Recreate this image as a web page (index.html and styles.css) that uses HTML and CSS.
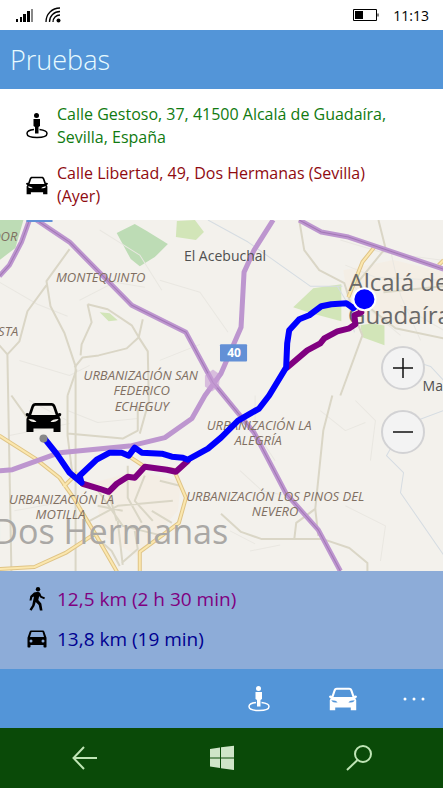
FILE: index.html
```html
<!DOCTYPE html>
<html lang="es">
<head>
    <meta charset="utf-8">
    <meta name="viewport" content="width=device-width, initial-scale=1.0">
    <title>Pruebas</title>
    <link rel="stylesheet" href="styles.css">
</head>
<body>
    <!-- Iconos compartidos -->
    <svg class="sprite" aria-hidden="true">
        <symbol id="icon-person" viewBox="0 0 22 26">
            <circle cx="10.500" cy="2.500" r="2.500"/>
            <path d="M7.500 6h6.500v7l-1.500 1v6.500h-3.500v-6.500l-1.500-1z"/>
            <path fill="none" stroke="currentColor" stroke-width="1.500" d="M8 16.500C3.500 17 1 18.500 1 20.500c0 2.500 4.500 4 10 4s10-1.500 10-4c0-2-3-3.500-7.500-4"/>
        </symbol>
        <symbol id="icon-car" viewBox="0 0 36 30">
            <path fill-rule="evenodd" d="M10 0.500h16c2 0 3.200 1 4 3l2.600 7.500c.7-.9 2.400-.8 3.200.2.400 1.300-.6 2.600-2 2.800l1.200 2.500v13h-7v-3.500h-20v3.500h-7v-13l1.200-2.500c-1.400-.2-2.400-1.500-2-2.800.8-1 2.500-1.100 3.200-.2l2.600-7.500c.8-2 2-3 4-3zM10.500 3.200c-1.100 0-1.700.5-2.100 1.500l-2.600 7.800h24.400l-2.600-7.800c-.4-1-1-1.500-2.100-1.500zM3 16.500c1 2.500 4 3 8 3-1-2-4-3-8-3zM33 16.500c-4 0-7 1-8 3 4 0 7-.5 8-3z"/>
        </symbol>
        <symbol id="icon-car-round" viewBox="0 0 20 18">
            <path fill-rule="evenodd" d="M4.500 0.500h11c1 0 1.600.4 1.900 1.300l2.100 6v8.700c0 .6-.3 1-1 1h-1c-.6 0-1-.4-1-1v-1.500h-13v1.500c0 .6-.4 1-1 1h-1c-.7 0-1-.4-1-1v-8.700l2.100-6c.3-.9.900-1.300 1.900-1.300zM4.500 2l-1.500 5h14l-1.500-5zM4 9.500a1.500 1.500 0 1 0 0 3a1.500 1.500 0 1 0 0-3zM16 9.500a1.500 1.500 0 1 0 0 3a1.500 1.500 0 1 0 0-3z"/>
        </symbol>
        <symbol id="icon-walk" viewBox="0 0 16 24">
            <circle cx="9" cy="2.200" r="2.200"/>
            <path d="M5 5.500l4-.8 2 1 1.500 3.300 3.500 1.500-.8 1.700-4-1.700-1-1.500-.9 4 3 3.500 1.200 7H10.900l-1.200-5.500-3-3-1.200 4-3 4.700-2-1.200 2.700-4.300 1.800-8.700-1.700.8-.8 3.200H.500l.8-4.500z"/>
        </symbol>
    </svg>

    <div class="status-bar">
        <svg class="signal" viewBox="0 0 18 14" aria-hidden="true">
            <path d="M0 11h2v3H0zM4 9h2v5H4zM7 6h3v8H7zM11 3h3v11h-3z"/>
            <path fill="#888" d="M15 1h2v13h-2z"/>
        </svg>
        <svg class="wifi" viewBox="0 0 17 16" aria-hidden="true">
            <circle cx="13.500" cy="13.500" r="2"/>
            <path fill="none" stroke="#000" stroke-width="1.300" d="M1 15C1 7 7 1 15 1M4.500 15c0-6 4.500-10.500 10.500-10.500M8 15c0-4 3-7 7-7"/>
        </svg>
        <svg class="battery" viewBox="0 0 26 12" aria-hidden="true">
            <path fill="none" stroke="#000" d="M.5.500h23v11H.500zM25 4.500v3"/>
            <path d="M2 2h8v8H2z"/>
        </svg>
        <time>11:13</time>
    </div>

    <header class="title-bar">
        <h1>Pruebas</h1>
    </header>

    <section class="addresses">
        <div class="row origin">
            <svg class="icon-person"><use href="#icon-person"/></svg>
            <p>Calle Gestoso, 37, 41500 Alcalá de Guadaíra, Sevilla, España</p>
        </div>
        <div class="row destination">
            <svg class="icon-car"><use href="#icon-car"/></svg>
            <p>Calle Libertad, 49, Dos Hermanas (Sevilla) (Ayer)</p>
        </div>
    </section>

    <main class="map">
        <svg class="map-canvas" viewBox="0 0 443 350" preserveAspectRatio="xMidYMid slice" role="img" aria-label="Mapa de la ruta">
            <!-- Zonas verdes -->
            <g class="park">
                <path d="M0 0h24l-8 28-16 12z"/>
                <path d="M117 13l18-9 12 7 21 13-13 13-15 9-9-7z"/>
                <path class="pale" d="M177 1l18-1 9 12-8 8-20-3z"/>
                <path class="pale" d="M293 87l20-19 28-4v37l-30-8zM360 105l24-4v24l-22-8z"/>
                <path class="pale" d="M100 92l10 1 8 7-9 1zM132 277l10-4 6 4-8 5z"/>
            </g>
            <path class="town" d="M343 50l50-10 50 12v45l-50 10-43-8zM94 262l42-12 45 10-3 30-40 45-35-20z"/>

            <!-- Calles y carreteras locales -->
            <g class="street">
                <path d="M100 10l40 25 22 35M80 80l35-18 30 5M0 62l38 22 30 12M20 140l50 15 20-10M160 60l40 12 28 40M160 140l40-16"/>
                <path d="M340 20l40 12 60 8M345 45l30 12 68 3M350 60l20 30 30 25M390 30l10 45 20 45M400 85l43 25"/>
                <path d="M355 180l20 20-5 40M320 190l25 20 20-8M240 250l22 20 20 4M30 180l38 20M10 215l60-12M15 290l55-10"/>
                <path d="M230 310l25 13M250 330l30-6M345 285l40 20-5 35M255 175v35l20 30M68 190l30 12 40-4"/>
            </g>
            <path class="river" d="M208 0l40 22 62 44h32M443 190l-40 15-17 30 17 17-3 20 43 62M405 138l25 8 13 14M337 66l12 20 5 26"/>
            <g class="local">
                <path d="M70 29L47 61l4 25 14 27 11 33v204M47 65L28 91l-8 30-12 13-8-9M8 134l4 216"/>
                <path d="M88 84l20 5 24 16 7 12-12 11-28 7-16 2-8 10M88 84l4 18-10 22-1 11M139 117l4-18M139 117l9 14 1 50-9 32"/>
                <path d="M68 175l9-26M68 175v40l5 40M68 213l55 5 15-8v-24M12 175l20 28"/>
                <path d="M299 0l5 30 15 20 25 13 10 32 8 20-22 60M332 175l-9 35-8 78-19 14-2 17"/>
                <path d="M221 293l20 18 20 7h61l27 9 18 15v8M315 288l3 27M443 118l-48-10-24-19M383 72l60-6M356 64l29-36-7-28"/>
                <path d="M95 265l28 40 40 10M128 245v32l14 25M90 300l28-15 55-5M109 272l8 28M92 312l20 18 8 15M145 255l-10 25 18 20M160 260l20 5M118 300l5 44M152 290l20 12M98 285l25 5M135 310l3 18-16 14"/>
            </g>

            <!-- Carreteras secundarias -->
            <g class="road-edge">
                <path id="sec1" d="M0 215l36 23 24 19 14 20 21 35 23 40"/>
                <path id="sec2" d="M0 348l35-2 31-14 29-19"/>
                <path id="sec3" d="M64 266l14-14M128 235l17 11 29 3 12 28-7 25-16 12-23 17v20"/>
                <path id="sec4" d="M374 27l-12 15-14 35M443 40l-5 5"/>
            </g>
            <g class="road">
                <use href="#sec1"/><use href="#sec2"/><use href="#sec3"/><use href="#sec4"/>
            </g>

            <!-- Topónimo grande, por debajo de las rutas -->
            <text class="label city-label large" x="111" y="323">Dos Hermanas</text>

            <!-- Autovías -->
            <g class="highway">
                <path d="M273 0l-19 30-10 22-3 55-20 46-16 22-13 23-27 19-33 8-72 7-47 17-13 1"/>
                <path d="M30 0l-8 22-12 23-10 11"/>
                <path d="M37 0l33 22 62 63 54 27 27 50 41 50 32 61 32 36 22 41"/>
                <path d="M299 0l22 12 27 5 95 32"/>
            </g>
            <g class="highway-line">
                <path d="M30 0l-8 22-12 23-10 11M37 0l33 22 62 63 54 27 27 50 41 50 32 61 32 36 22 41M299 0l22 12 27 5 95 32"/>
            </g>
            <path class="junction" d="M205 155l8-6 7 5-1 12-7 5-7-5z"/>
            <path class="sign" d="M27 0h26v2H27z"/>
            <rect class="sign" x="220" y="124" width="27" height="17" rx="1"/>
            <text class="sign-text" x="234" y="137">40</text>

            <!-- Topónimos -->
            <g class="label city-label">
                <text x="398" y="71">Alcalá de</text>
                <text x="399" y="104">Guadaíra</text>
            </g>
            <text class="label village" x="225" y="41">El Acebuchal</text>
            <text class="label village start" x="422" y="171">Mairena</text>
            <g class="label area">
                <text x="101" y="62">MONTEQUINTO</text>
                <text class="end" x="18" y="21">NERVADOR</text>
                <text class="end" x="19" y="116">COSTA</text>
                <text x="141" y="160">URBANIZACIÓN SAN</text>
                <text x="142" y="175">FEDERICO</text>
                <text x="142" y="190">ECHEGUY</text>
                <text x="259" y="209">URBANIZACIÓN LA</text>
                <text x="258" y="224">ALEGRÍA</text>
                <text x="62" y="283">URBANIZACIÓN LA</text>
                <text x="61" y="298">MOTILLA</text>
                <text x="275" y="280">URBANIZACIÓN LOS PINOS DEL</text>
                <text x="275" y="295">NEVERO</text>
            </g>

            <!-- Rutas: a pie y en coche -->
            <path class="route walk" d="M360 88l1 4-7 3 1 9-6 4-12 3-13 7-4 5-13 7-20 17M188 240l-12 11-9-2-22-3-10 11-7-1-11 7-8 8-9-3-17-5"/>
            <path class="route drive" d="M364 79l-11 9-7-5-15 1-10 2-12 9-10 4-10 11-2 13-1 24-17 28-10 13-21 12-17 17-13 11-20 11-5-2-11-1-10-3-20-1-7-5-6 8-7-3h-12l-13 7-17 16 2 7-12-10-13-19-12-15"/>
            <circle class="start-dot" cx="44" cy="218" r="4"/>
            <circle class="end-dot" cx="364" cy="79" r="11"/>
            <use href="#icon-car" x="26" y="181" width="36" height="32"/>
        </svg>
        <div class="zoom">
            <button type="button" aria-label="Acercar">
                <svg viewBox="0 0 20 20"><path d="M0 10h20M10 0v20"/></svg>
            </button>
            <button type="button" aria-label="Alejar">
                <svg viewBox="0 0 20 20"><path d="M0 10h20"/></svg>
            </button>
        </div>
    </main>

    <section class="summary">
        <div class="row walk-time">
            <svg class="icon-walk"><use href="#icon-walk"/></svg>
            <p>12,5 km (2 h 30 min)</p>
        </div>
        <div class="row drive-time">
            <svg class="icon-car-round"><use href="#icon-car-round"/></svg>
            <p>13,8 km (19 min)</p>
        </div>
    </section>

    <div class="app-bar">
        <button type="button" aria-label="Mi posición">
            <svg class="bar-person"><use href="#icon-person"/></svg>
        </button>
        <button type="button" aria-label="Mi coche">
            <svg class="bar-car"><use href="#icon-car"/></svg>
        </button>
        <button type="button" class="more" aria-label="Más">
            <svg class="bar-more" viewBox="0 0 24 4"><circle cx="3" cy="2" r="1.500"/><circle cx="12" cy="2" r="1.500"/><circle cx="21" cy="2" r="1.500"/></svg>
        </button>
    </div>

    <nav class="nav-bar">
        <button type="button" aria-label="Atrás">
            <svg viewBox="0 0 26 26"><path class="line" d="M25 13H2M12 2L1.500 13L12 24"/></svg>
        </button>
        <button type="button" aria-label="Inicio">
            <svg viewBox="0 0 26 26"><path d="M1 4l10-1.500v10H1zM12 2.300L25 .800v11.700H12zM1 13.500h10v9.500L1 21.500zM12 13.500h13V25l-13-1.800z"/></svg>
        </button>
        <button type="button" aria-label="Buscar">
            <svg viewBox="0 0 26 26"><circle class="line" cx="17" cy="9" r="8"/><path class="line" d="M11.500 15L1 25"/></svg>
        </button>
    </nav>
</body>
</html>
```

FILE: styles.css
```css
* {
    box-sizing: border-box;
}
body {
    margin: 0;
    min-height: 100vh;
    display: flex;
    flex-direction: column;
    font-family: "Open Sans", "Noto Sans", sans-serif;
    background: #fff;
}
h1, p {
    margin: 0;
    font-weight: 400;
}
svg {
    display: block;
    fill: currentColor;
}
button {
    display: flex;
    align-items: center;
    justify-content: center;
    padding: 0;
    border: none;
    background: none;
    color: inherit;
    cursor: pointer;
}
.sprite {
    position: absolute;
    width: 0;
    height: 0;
}

/* Barra de estado */
.status-bar {
    display: flex;
    align-items: center;
    height: 30px;
    padding: 0 14px 0 16px;
    font-size: 14px;
}
.signal {
    width: 18px;
    height: 14px;
}
.wifi {
    width: 17px;
    height: 16px;
    margin-left: 11px;
}
.battery {
    width: 26px;
    height: 12px;
    margin-left: auto;
}
.status-bar time {
    margin-left: 14px;
}

.title-bar {
    display: flex;
    align-items: center;
    height: 59px;
    padding: 0 10px;
    background: #5395d8;
    color: #e8fbff;
}
.title-bar h1 {
    font-size: 27px;
    font-weight: 300;
}

/* Direcciones y resumen */
.addresses {
    display: flex;
    flex-direction: column;
    gap: 13px;
    padding: 14px 40px 12px 25px;
    font-size: 16px;
    line-height: 23px;
}
.row {
    display: grid;
    grid-template-columns: 24px 1fr;
    gap: 8px;
    align-items: center;
}
.row svg {
    justify-self: center;
    color: #000;
}
.origin {
    color: #107a10;
}
.destination {
    color: #8f0a10;
}
.icon-person {
    width: 22px;
    height: 26px;
}
.icon-car {
    width: 22px;
    height: 19px;
}
.icon-walk {
    width: 16px;
    height: 24px;
}
.icon-car-round {
    width: 20px;
    height: 18px;
}
.summary {
    display: flex;
    flex-direction: column;
    gap: 16px;
    padding: 16px 25px 18px;
    background: #8dacd8;
    font-size: 19px;
    line-height: 24px;
}
.walk-time {
    color: #800080;
}
.drive-time {
    color: #000090;
}

/* Mapa */
.map {
    position: relative;
    flex: 1;
    display: grid;
    min-height: 240px;
    overflow: hidden;
    background: #f3f1ec;
}
.map-canvas {
    width: 100%;
    height: 100%;
    min-height: 0;
}
.map-canvas path {
    stroke-linejoin: round;
}
.park path {
    fill: #bddcb5;
}
.park .pale {
    fill: #d2e5b8;
}
.town {
    fill: #f4eee5;
}
.street, .local, .road, .road-edge, .highway, .highway-line, .river {
    fill: none;
}
.street {
    stroke: #e9e7e1;
}
.river {
    stroke: #d5dce2;
}
.local {
    stroke: #dad6c6;
    stroke-width: 2;
}
.road-edge {
    stroke: #dfc487;
    stroke-width: 4;
}
.road {
    stroke: #fbe7ae;
    stroke-width: 2;
}
.highway {
    stroke: #bd96cf;
    stroke-width: 5;
}
.highway-line {
    stroke: #a277b5;
}
.junction {
    fill: #c79bd3;
    opacity: 0.6;
}
.sign {
    fill: #6390d6;
}
.sign-text {
    fill: #fff;
    font-size: 12px;
    font-weight: 700;
    text-anchor: middle;
}
.label {
    text-anchor: middle;
}
.area {
    fill: #806f62;
    font-size: 13px;
    font-style: italic;
}
.village {
    fill: #505050;
    font-size: 14px;
}
.city-label {
    fill: #696969;
    font-size: 24px;
}
.large {
    fill: #aaa8a5;
    font-size: 34px;
}
.area .end {
    text-anchor: end;
}
.start {
    text-anchor: start;
}
.route {
    fill: none;
    stroke-width: 6;
    stroke-linecap: round;
}
.walk {
    stroke: #800080;
}
.drive {
    stroke: #00f;
}
.start-dot {
    fill: #888;
}
.end-dot {
    fill: #00f;
    stroke: #fff;
    stroke-width: 2;
}
.zoom {
    position: absolute;
    top: 126px;
    right: 18px;
    display: flex;
    flex-direction: column;
    gap: 20px;
}
.zoom button {
    width: 44px;
    height: 44px;
    border: 2px solid #d2d2d4;
    border-radius: 50%;
    background: #f3f3f3;
}
.zoom svg {
    width: 20px;
    height: 20px;
    stroke: #111;
    stroke-width: 1.5;
}

/* Barras inferiores */
.app-bar {
    display: flex;
    justify-content: flex-end;
    height: 59px;
    background: #5395d8;
    color: #fff;
}
.app-bar button {
    width: 84px;
}
.app-bar .more {
    width: 58px;
}
.bar-person {
    width: 22px;
    height: 26px;
}
.bar-car {
    width: 28px;
    height: 24px;
}
.bar-more {
    width: 24px;
    height: 4px;
}
.nav-bar {
    display: grid;
    grid-template-columns: repeat(3, 1fr);
    height: 60px;
    padding: 0 16px;
    background: #0a4a08;
    color: #cfe5c8;
}
.nav-bar svg {
    width: 26px;
    height: 26px;
}
.nav-bar .line {
    fill: none;
    stroke: #bfe5b5;
    stroke-width: 2;
}
```
